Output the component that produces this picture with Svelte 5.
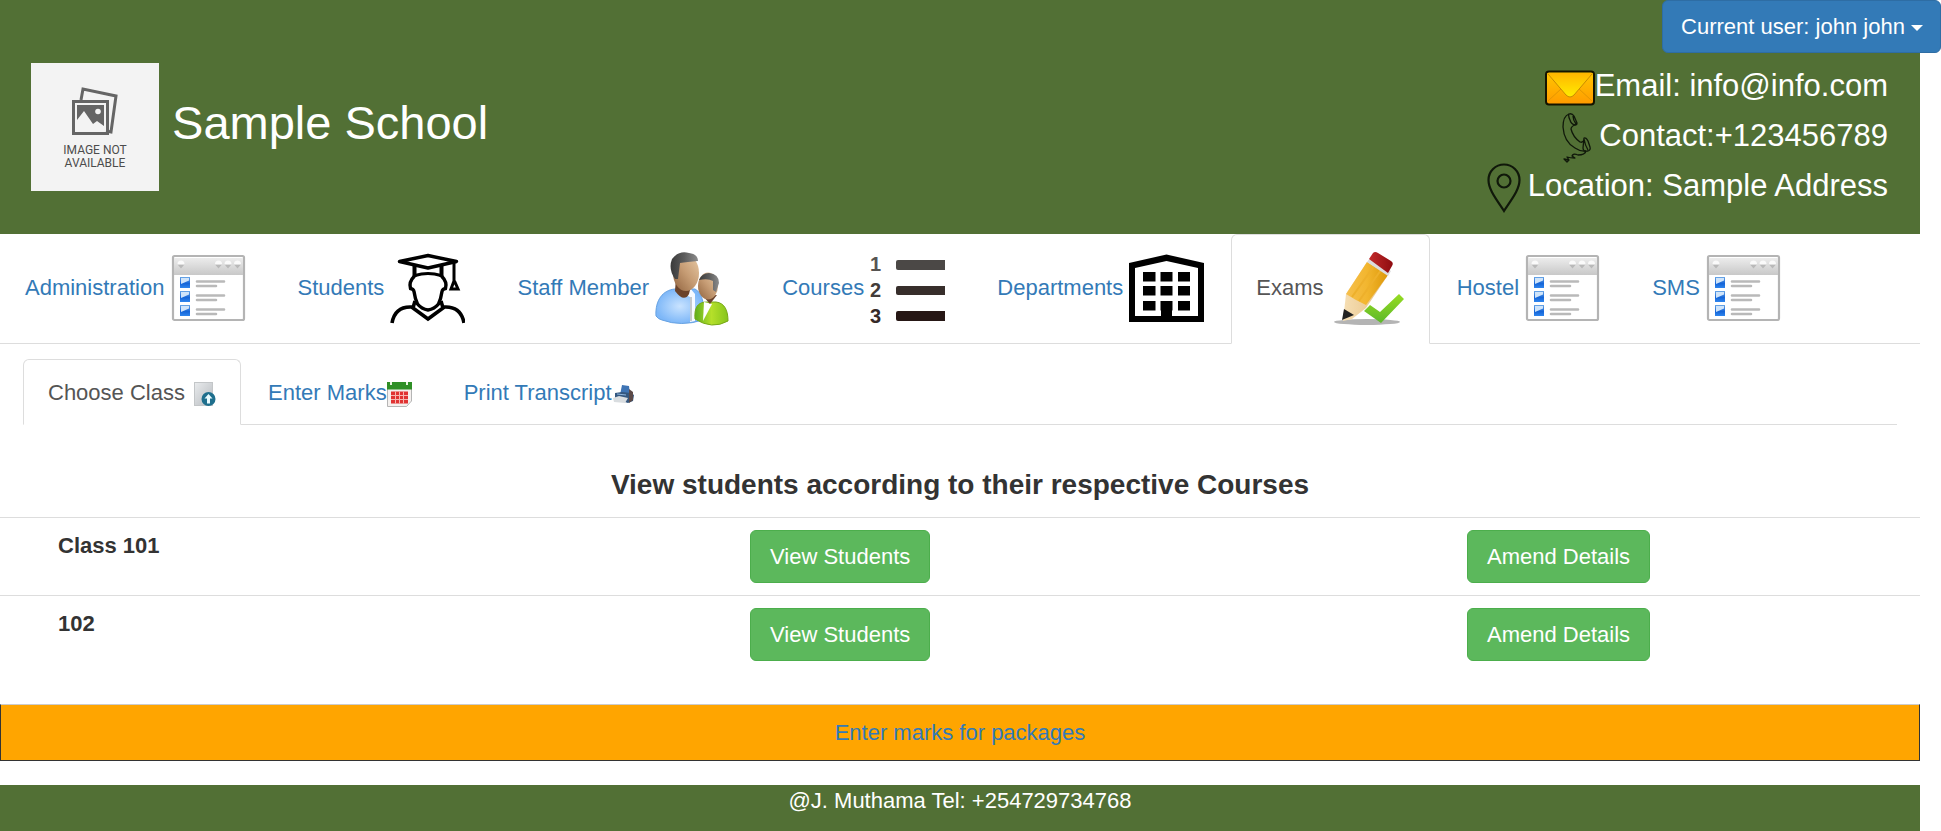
<script>
  const mainTabs = [
    { label: 'Administration', icon: 'window' },
    { label: 'Students', icon: 'graduate' },
    { label: 'Staff Member', icon: 'people' },
    { label: 'Courses', icon: 'list' },
    { label: 'Departments', icon: 'building' },
    { label: 'Exams', icon: 'pencil' },
    { label: 'Hostel', icon: 'window' },
    { label: 'SMS', icon: 'window' }
  ];
  const classes = ['Class 101', '102'];
  let active = $state('Exams');
  let activeSub = $state('Choose Class');
</script>

{#snippet windowIcon()}
  <svg class="tab-icon" viewBox="0 0 75 75" aria-hidden="true">
    <rect x="2" y="4" width="71" height="64" rx="1.500" fill="#fff" stroke="#b4b4b4" stroke-width="2.200" />
    <rect x="3" y="6" width="69" height="17" fill="url(#bar)" />
    <g fill="#fafafa"><path d="M6.500 12a3.500 3.500 0 0 1 7 0zM44 12a3.500 3.500 0 0 1 7 0zM53.500 12a3.500 3.500 0 0 1 7 0zM63 12a3.500 3.500 0 0 1 7 0z" /></g>
    <g fill="#b9b9b9"><path d="M7 13h6l-3 3.500zM44.500 13h6l-3 3.500zM54 13h6l-3 3.500zM63.500 13h6l-3 3.500z" /></g>
    {#each [25, 39, 53] as y}
      <rect x="9" {y} width="10" height="11" fill="url(#box)" />
      <path d="M10 {y + 1}h8v2.500l-8 3.500z" fill="#cfe4fa" />
      <path d="M26 {y + 4.500}h27M26 {y + 9}h19" stroke="#b9b9b9" stroke-width="2.600" stroke-linecap="round" />
    {/each}
  </svg>
{/snippet}

{#snippet graduateIcon()}
  <svg class="tab-icon" viewBox="0 0 75 75" fill="none" stroke="#000" stroke-width="4" aria-hidden="true">
    <path d="M9.500 9.500 38 3.500l28.500 6L38 16z" stroke-width="3.400" stroke-linejoin="round" />
    <path d="M24.500 13v12M51.500 13v12" />
    <path d="M25 23.500q13-4 26 0" stroke-width="3" />
    <path d="M24.500 24q-6 6-4 12.500 3 .5 3.500 3 1 7 3.500 12.500 4 5 10.500 6 6.500-1 10.500-6 2.500-5.500 3.500-12.500.5-2.500 3.500-3 2-6.500-4-12.500" stroke-width="3.400" />
    <path d="M25 49l-2 7 15 11 15-11-2-7M22 55Q5 54 2 71M54 55q17-1 20 16" stroke-width="3.600" />
    <path d="M64 11v18l-3 8h7l-3.500-8" stroke-width="3" />
  </svg>
{/snippet}

{#snippet peopleIcon()}
  <svg class="tab-icon" viewBox="0 0 75 75" aria-hidden="true">
    <path d="M1 64C0 48 8 38 20 37h20c8 4 10 18 8 31q-22 7-41 0-4-1-6-4z" fill="url(#blueShirt)" stroke="#67a2e2" />
    <path d="M25 40l10 5 0 25 5-1 0-27-5-6z" fill="#f7faff" />
    <path d="M36 45v24" stroke="#b6b8bd" stroke-width="1.500" />
    <path d="M21 25l-1 14q9 12 14 3l2-8z" fill="#6b432b" />
    <ellipse cx="31" cy="21" rx="13" ry="18" fill="url(#skin)" />
    <path d="M20 27Q13 17 17 7 24-2 34 1q9 1 9 8-11 1-18 2l-1 8-1 8z" fill="url(#hair)" />
    <path d="M40 67c-1-12 3-17 12-17h9c9 1 12 9 12 19q-16 9-33-2z" fill="url(#greenShirt)" stroke="#78a817" />
    <path d="M49 50l-1 19 9-17z" fill="#fff" />
    <path d="M48 44l7 8 7-9z" fill="#6b432b" />
    <ellipse cx="53" cy="34" rx="10" ry="13.500" fill="url(#skin)" />
    <path d="M44 28q3-7 10-7 10 1 10 10l-3 9-3-2v-9q-5-3-14-1z" fill="url(#hair)" />
  </svg>
{/snippet}

{#snippet listIcon()}
  <svg class="tab-icon" viewBox="0 0 75 75" aria-hidden="true">
    <g font-family="Liberation Sans, Arial, sans-serif" font-size="20" font-weight="bold">
      <text x="0" y="19" fill="#565452">1</text>
      <text x="0" y="45" fill="#433c39">2</text>
      <text x="0" y="71" fill="#352a28">3</text>
    </g>
    <rect x="26" y="8" width="52" height="10" rx="2" fill="#4b4846" />
    <rect x="26" y="34" width="52" height="9" rx="2" fill="#372e2b" />
    <rect x="26" y="59" width="52" height="10" rx="2" fill="#261715" />
  </svg>
{/snippet}

{#snippet buildingIcon()}
  <svg class="tab-icon" viewBox="0 0 75 75" aria-hidden="true">
    <path d="M0 11 37.500 2.500 75 11v59H0z" />
    <path d="M6 16 37.500 9 69 16v48H43V49H32v15H6z" fill="#fff" />
    {#each [20, 34, 49] as y}
      <rect x="14" {y} width="12.500" height="9.500" />
      <rect x="31.500" {y} width="12" height="9.500" />
      <rect x="49" {y} width="12" height="9.500" />
    {/each}
  </svg>
{/snippet}

{#snippet pencilIcon()}
  <svg class="tab-icon" viewBox="0 0 75 75" aria-hidden="true">
    <ellipse cx="37" cy="70" rx="33" ry="3" fill="#b4b4b4" />
    <path d="M16 42 37 10l21 13-22 33-14 11-9 2z" fill="url(#wood)" />
    <path d="M16 42 37 10l21 13-22 30-10-5z" fill="url(#pencil)" />
    <path d="M22 45 44 14M29 49l22-31" stroke="#eeb02b" stroke-width="2" />
    <path d="M14 57l10 6-12 5z" fill="#222" />
    <path d="M37 10l3-4 21 13-3 5z" fill="#dcdcdc" />
    <path d="M39 7l4-6q2-2 5 0l13 8q3 2 1 5l-4 7z" fill="url(#eraser)" />
    <path d="M34 59l6-6 10 7 19-18 5 5-23 24z" fill="url(#check)" />
  </svg>
{/snippet}

<svg class="defs" aria-hidden="true">
  <defs>
    <linearGradient id="bar" x2="0" y2="1"><stop stop-color="#ececec" /><stop offset="1" stop-color="#c8c8c8" /></linearGradient>
    <linearGradient id="box" x2="0" y2="1"><stop stop-color="#6aa6e6" /><stop offset=".6" stop-color="#1565d8" /><stop offset="1" stop-color="#2f86ee" /></linearGradient>
    <radialGradient id="blueShirt"><stop stop-color="#c9e3ff" /><stop offset="1" stop-color="#7db7f8" /></radialGradient>
    <linearGradient id="greenShirt" x2="1" y2="0"><stop stop-color="#5fae1c" /><stop offset=".5" stop-color="#b5e02a" /><stop offset="1" stop-color="#86c51c" /></linearGradient>
    <linearGradient id="skin" x1="1" x2="0" y2="1"><stop stop-color="#e9cba6" /><stop offset=".5" stop-color="#c69c74" /><stop offset="1" stop-color="#90633e" /></linearGradient>
    <linearGradient id="hair" x2="1" y2="0"><stop stop-color="#3a3a3a" /><stop offset=".5" stop-color="#5c5c5c" /><stop offset="1" stop-color="#8c8c8c" /></linearGradient>
    <linearGradient id="wood" x2="1" y2="0"><stop stop-color="#f6dfb4" /><stop offset="1" stop-color="#e4bd80" /></linearGradient>
    <linearGradient id="pencil" x2="1" y2="0"><stop stop-color="#f6bf4c" /><stop offset=".5" stop-color="#f2b62f" /><stop offset="1" stop-color="#dd9808" /></linearGradient>
    <linearGradient id="eraser" x2="1" y2="0"><stop stop-color="#c22a2a" /><stop offset="1" stop-color="#8e0c10" /></linearGradient>
    <linearGradient id="check" x2="0" y2="1"><stop stop-color="#97dc22" /><stop offset="1" stop-color="#5cb82a" /></linearGradient>
    <linearGradient id="mail" x2="0" y2="1"><stop stop-color="#ffc800" /><stop offset="1" stop-color="#ff9a00" /></linearGradient>
    <linearGradient id="flap" x2="0" y2="1"><stop stop-color="#ffb600" /><stop offset="1" stop-color="#ffec00" /></linearGradient>
    <linearGradient id="page" x2="1" y2="1"><stop stop-color="#e9ebed" /><stop offset="1" stop-color="#b7bbbf" /></linearGradient>
  </defs>
</svg>

<button class="user" type="button">Current user: john john <span class="caret"></span></button>

<div class="page">
  <header>
    <div class="brand">
      <svg class="logo" viewBox="0 0 128 128" role="img" aria-label="School logo">
        <rect width="128" height="128" fill="#f3f3f3" />
        <g fill="none" stroke="#656565" stroke-width="3">
          <path d="M50 37l2-11 33 7-5 36-5-1" />
          <rect x="42.500" y="38.500" width="34" height="32" />
        </g>
        <path d="M46 42h27v21l-7-5-4 3-9-13-7 9z" fill="#656565" />
        <circle cx="67" cy="48.500" r="2.800" fill="#f3f3f3" />
        <g font-family="Liberation Sans Narrow, Roboto, sans-serif" font-size="12" fill="#4c4c4c" text-anchor="middle">
          <text x="64" y="91">IMAGE NOT</text>
          <text x="64" y="104">AVAILABLE</text>
        </g>
      </svg>
      <span>Sample School</span>
    </div>
    <address>
      <div>
        <svg class="contact-icon" viewBox="0 0 50 50" aria-hidden="true">
          <rect x="1" y="8.500" width="48" height="33" rx="3" fill="url(#mail)" stroke="#141400" stroke-width="2" />
          <path d="M3 38 17 25M47 38 33 25" stroke="#e39600" />
          <path d="M2 10h46L29 32q-4 4-8 0z" fill="url(#flap)" />
          <path d="M3 11 21 32q4 4 8 0L47 11" fill="none" stroke="#c98a00" />
        </svg><span>Email: info@info.com</span>
      </div>
      <div>
        <svg class="contact-icon" viewBox="0 0 50 50" fill="none" stroke="#10180a" stroke-width="1.300" stroke-linejoin="round" aria-hidden="true">
          <path d="M20 1q-6 2-6 13 1 15 12 21 6 4 11 3" />
          <path d="M28 11q-6 2-6 5 2 8 9 13 3 1 4-2" />
          <path d="M20 1q3-1 5 2l3 7q0 2-2 2-4-1-5-5-2-4-1-6zM24 3q0 4 3 8" />
          <path d="M35 25q2-1 4 3l2 6q1 3-2 4-5 1-5-3zM35 26q1 6 4 11" />
          <path d="M37 38q-1 4-8 4-5-2-6 1l3 2q-5 0-8-1l2 3-5-1 3 3 2-2" />
        </svg><span>Contact:+123456789</span>
      </div>
      <div>
        <svg class="contact-icon" viewBox="0 0 50 50" fill="none" stroke="#10180a" stroke-width="2.200" aria-hidden="true">
          <path d="M26 48C19 37 10.500 27 10.500 17a15.500 15.500 0 0 1 31 0c0 10-8.500 20-15.500 31z" />
          <circle cx="26" cy="18" r="6.500" />
        </svg><span>Location: Sample Address</span>
      </div>
    </address>
  </header>

  <nav class="tabs main" aria-label="Sections">
    {#each mainTabs as tab}
      <a href="#{tab.label}" class:active={active === tab.label} onclick={() => (active = tab.label)}>{tab.label}
        {#if tab.icon === 'window'}{@render windowIcon()}
        {:else if tab.icon === 'graduate'}{@render graduateIcon()}
        {:else if tab.icon === 'people'}{@render peopleIcon()}
        {:else if tab.icon === 'list'}{@render listIcon()}
        {:else if tab.icon === 'building'}{@render buildingIcon()}
        {:else}{@render pencilIcon()}{/if}</a>
    {/each}
  </nav>

  <nav class="tabs sub" aria-label="Exams">
    <a href="#choose" class:active={activeSub === 'Choose Class'} onclick={() => (activeSub = 'Choose Class')}>Choose Class
      <svg class="small-icon" viewBox="0 0 25 25" aria-hidden="true">
        <rect x="3.500" y=".5" width="18" height="23" fill="url(#page)" stroke="#c3c6c8" />
        <circle cx="17.500" cy="17" r="7" fill="#1f6f8d" />
        <path d="M17.500 12l4 4.500h-2.500v5h-3v-5h-2.500z" fill="#e9fbff" />
      </svg></a>
    <a href="#marks" class:active={activeSub === 'Enter Marks'} onclick={() => (activeSub = 'Enter Marks')}>Enter Marks<svg class="small-icon" viewBox="0 0 25 25" aria-hidden="true">
        <path d="M.5 1h24v18l-5 5.500H.5z" fill="#f4f0ee" stroke="#b5b5b5" />
        <rect width="25" height="7.500" fill="#2f8f26" />
        <path d="M4 0v3M20 0v3" stroke="#e8f5e0" stroke-width="2" />
        <rect x="4" y="9.500" width="17" height="12" fill="#e03232" />
        <path d="M4 13.500h17M4 17.500h17M8.500 9.500v12M12.500 9.500v12M16.500 9.500v12" stroke="#f6b5b0" />
      </svg></a>
    <a href="#transcript" class:active={activeSub === 'Print Transcript'} onclick={() => (activeSub = 'Print Transcript')}>Print Transcript<svg class="small-icon" viewBox="0 0 25 25" aria-hidden="true">
        <path d="M10 3l7 1 1 9-10 0z" fill="#3e74b4" />
        <path d="M3 11l7-1 9 1 3 2-1 6-5 2-13-4z" fill="#34577f" />
        <path d="M17 7l4 3v8l-4 3z" fill="#5c4a48" />
        <path d="M1 16l6-2 9 2-3 5-11-1z" fill="#d9dde0" />
        <path d="M5 12l9 1" stroke="#8fb6de" />
      </svg></a>
  </nav>

  <table>
    <thead>
      <tr><th class="title" colspan="3">View students according to their respective Courses</th></tr>
    </thead>
    <tbody>
      {#each classes as name}
        <tr>
          <th scope="row">{name}</th>
          <td><button class="action" type="button">View Students</button></td>
          <td><button class="action" type="button">Amend Details</button></td>
        </tr>
      {/each}
    </tbody>
  </table>

  <div class="packages"><a href="#packages">Enter marks for packages</a></div>

  <footer>@J. Muthama Tel: +254729734768</footer>
</div>

<style>
  :global(body) {
    font-family: "Liberation Sans", Arial, sans-serif;
    font-size: 22px;
    line-height: 31px;
    color: #333;
    background: #fff;
  }
  .defs { position: absolute; width: 0; height: 0; }
  .page { margin-right: 21px; }
  a { color: #337ab7; text-decoration: none; }
  button { font: inherit; color: #fff; cursor: pointer; border-radius: 6px; padding: 10px 19px; }

  .user {
    position: absolute;
    top: 0;
    right: 0;
    padding: 10px 17px 10px 18px;
    background: #337ab7;
    border: 1px solid #2e6da4;
  }
  .caret {
    display: inline-block;
    vertical-align: middle;
    border: 6px solid transparent;
    border-top-color: #fff;
    border-bottom: 0;
  }

  header {
    display: flex;
    justify-content: space-between;
    padding: 63px 32px 21px 31px;
    background: #527035;
    color: #fff;
  }
  .brand { font-size: 47px; line-height: 52px; white-space: nowrap; }
  .logo { width: 128px; height: 128px; vertical-align: middle; }
  address { font-style: normal; font-size: 31px; line-height: 44px; text-align: right; white-space: nowrap; }
  address div { height: 50px; }
  .contact-icon { width: 50px; height: 50px; vertical-align: middle; }

  .tabs { display: flex; gap: 2px; border-bottom: 1px solid #ddd; }
  .tabs a {
    padding: 17px 24px 16px;
    margin-bottom: -1px;
    border: 1px solid transparent;
    border-radius: 6px 6px 0 0;
    white-space: nowrap;
  }
  .tabs a.active { color: #555; background: #fff; border-color: #ddd; border-bottom-color: #fff; }
  .main a { height: 75px; }
  .sub a { height: 31px; }
  .tab-icon { width: 75px; height: 75px; vertical-align: middle; }
  .small-icon { width: 25px; height: 25px; vertical-align: middle; }
  .sub { margin: 15px 23px 28px; }

  table { display: block; }
  thead, tbody { display: block; }
  thead tr { display: grid; }
  tbody tr { display: grid; grid-template-columns: 738fr 717fr 465fr; }
  th, td { padding: 12px; text-align: left; }
  th.title { font-size: 28px; line-height: 40px; text-align: center; }
  tbody th, tbody td { border-top: 1px solid #ddd; }
  tbody th { padding-left: 58px; }
  .action { display: block; background: #5cb85c; border: 1px solid #4cae4c; }

  .packages {
    margin: 31px 0 24px;
    padding: 12px;
    text-align: center;
    background: #ffa500;
    border: 1px solid #333;
    border-top-color: #ccc;
  }
  footer { padding-bottom: 15px; text-align: center; color: #fff; background: #527035; }
</style>
